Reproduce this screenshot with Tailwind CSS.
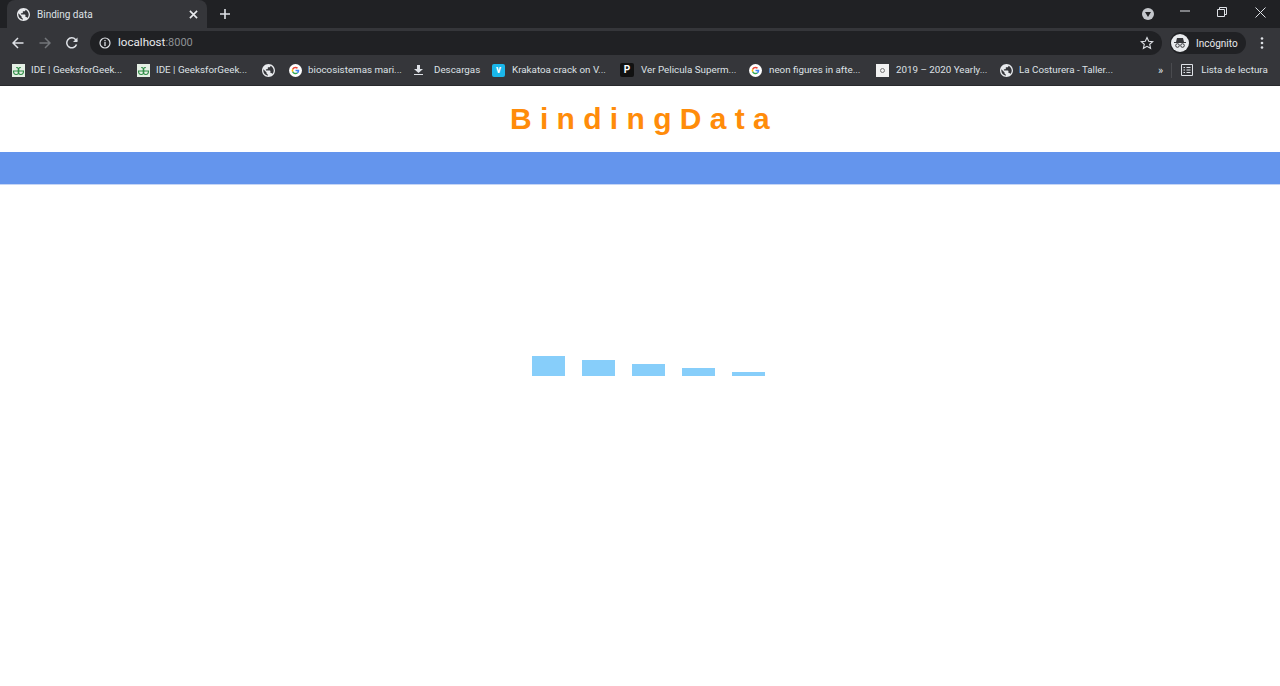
<!DOCTYPE html>
<html lang="en">
  <head>
    <meta charset="UTF-8" />
    <meta name="viewport" content="width=device-width, initial-scale=1.0" />
    <title>Binding data</title>
    <script src="https://cdn.jsdelivr.net/npm/@tailwindcss/browser@4"></script>
  </head>
  <body class="bg-white font-['Roboto',sans-serif] overflow-hidden h-[686px]">
    <!-- Tab strip -->
    <div class="h-[28px] bg-[#202124] flex items-end text-[#dee1e6]">
      <div class="ml-[7px] w-[200px] h-[28px] bg-[#35363a] rounded-t-lg flex items-center pl-[10px] pr-[9px]">
        <svg class="w-[13px] h-[13px] shrink-0" viewBox="2 2 20 20"><path fill="#e8eaed" d="M12 2C6.480 2 2 6.480 2 12s4.480 10 10 10 10-4.480 10-10S17.520 2 12 2zm-1 17.930c-3.950-.49-7-3.850-7-7.930 0-.62.08-1.210.21-1.790L9 15v1c0 1.100.9 2 2 2v1.930zm6.900-2.540c-.26-.81-1-1.390-1.900-1.390h-1v-3c0-.55-.45-1-1-1H8v-2h2c.55 0 1-.45 1-1V7h2c1.100 0 2-.9 2-2v-.41c2.930 1.190 5 4.060 5 7.410 0 2.080-.8 3.970-2.100 5.390z"/></svg>
        <span class="ml-[7px] text-[10px] flex-1">Binding data</span>
        <svg class="w-[9px] h-[9px]" viewBox="0 0 10 10"><path d="M1 1l8 8M9 1l-8 8" stroke="#e8eaed" stroke-width="1.800"/></svg>
      </div>
      <svg class="ml-[12px] mb-[8px] w-[12px] h-[12px]" viewBox="0 0 12 12"><path d="M6 1v10M1 6h10" stroke="#dee1e6" stroke-width="1.600"/></svg>
      <div class="ml-auto flex items-center h-[28px]">
        <div class="w-[12px] h-[12px] rounded-full bg-[#c4c7cc] flex items-center justify-center">
          <svg class="w-[6px] h-[5px]" viewBox="0 0 6 5"><path d="M0 0h6L3 5z" fill="#202124"/></svg>
        </div>
        <svg class="ml-[26px] mb-[6px] w-[10px] h-[10px]" viewBox="0 0 10 10"><path d="M0 5h10" stroke="#dee1e6"/></svg>
        <svg class="ml-[27px] mb-[4px] w-[10px] h-[10px]" viewBox="0 0 10 10" fill="none"><path d="M.5 2.500h7v7h-7zM2.500 2.500v-2h7v7h-2" stroke="#dee1e6"/></svg>
        <svg class="ml-[28px] mr-[14px] mb-[4px] w-[11px] h-[11px]" viewBox="0 0 11 11"><path d="M.5.5l10 10M10.500.5l-10 10" stroke="#dee1e6"/></svg>
      </div>
    </div>

    <!-- Toolbar -->
    <div class="h-[27px] pt-[3px] bg-[#35363a] flex items-center">
      <svg class="ml-[12px] w-[12px] h-[12px]" viewBox="0 0 12 12" fill="none"><path d="M11.500 6H1M6 1L1 6l5 5" stroke="#dee1e6" stroke-width="1.500"/></svg>
      <svg class="ml-[15px] w-[12px] h-[12px]" viewBox="0 0 12 12" fill="none"><path d="M.5 6H11M6 1l5 5-5 5" stroke="#73767a" stroke-width="1.500"/></svg>
      <svg class="ml-[15px] w-[12px] h-[12px]" viewBox="0 0 12 12" fill="none"><path d="M10.500 7.500A5 5 0 1 1 9.500 2.500L11 4" stroke="#dee1e6" stroke-width="1.500"/><path d="M11.500 .5v4.500H7z" fill="#dee1e6"/></svg>
      <div class="ml-[12px] w-[1072px] h-[24px] bg-[#202124] rounded-full flex items-center pl-[9px] pr-[8px]">
        <svg class="w-[12px] h-[12px]" viewBox="0 0 12 12" fill="none"><circle cx="6" cy="6" r="5" stroke="#dee1e6" stroke-width="1.200"/><path d="M6 5v4M6 3v1.200" stroke="#dee1e6" stroke-width="1.300"/></svg>
        <span class="ml-[7px] text-[11.600px] text-[#e8eaed]">localhost<span class="text-[#8e9195] text-[11px]">:8000</span></span>
        <svg class="ml-auto w-[14px] h-[14px]" viewBox="0 0 14 14" fill="none"><path d="M7 1.500l1.700 3.700 4 .4-3 2.700.9 4L7 10.300l-3.600 2 .9-4-3-2.700 4-.4z" stroke="#dee1e6" stroke-width="1.100"/></svg>
      </div>
      <div class="ml-[8px] w-[76px] h-[22px] bg-[#202124] rounded-full flex items-center pl-[1px]">
        <div class="w-[18px] h-[18px] rounded-full bg-[#e8eaed] flex items-center justify-center">
          <svg class="w-[14px] h-[14px]" viewBox="0 0 14 14" fill="none"><path d="M1 6h12v1H1zM4 2h6l1 4H3z" fill="#35363a"/><circle cx="4.500" cy="9.500" r="1.800" stroke="#35363a"/><circle cx="9.500" cy="9.500" r="1.800" stroke="#35363a"/></svg>
        </div>
        <span class="ml-[7px] text-[10px] text-[#e8eaed]">Incógnito</span>
      </div>
      <svg class="ml-[14px] w-[4px] h-[12px]" viewBox="0 0 4 12"><circle cx="2" cy="1.500" r="1.300" fill="#dee1e6"/><circle cx="2" cy="6" r="1.300" fill="#dee1e6"/><circle cx="2" cy="10.500" r="1.300" fill="#dee1e6"/></svg>
    </div>

    <!-- Bookmarks bar -->
    <div class="h-[31px] bg-[#35363a] border-b border-[#28292c] flex items-center text-[9.800px] text-[#dee1e6] whitespace-nowrap">
      <div class="ml-[12px] w-[112px] flex items-center">
        <svg class="w-[13px] h-[13px] shrink-0" viewBox="0 0 13 13"><rect width="13" height="13" fill="#e4efe4"/><path d="M6.500 7H1.500a2.700 3.500 0 1 0 2.700-3.500h1.500M6.500 7h5a2.700 3.500 0 1 1-2.700-3.500H7.300" fill="none" stroke="#2f8d46" stroke-width="1.100"/></svg>
        <span class="ml-[6px]">IDE | GeeksforGeek...</span>
      </div>
      <div class="ml-[13px] w-[112px] flex items-center">
        <svg class="w-[13px] h-[13px] shrink-0" viewBox="0 0 13 13"><rect width="13" height="13" fill="#e4efe4"/><path d="M6.500 7H1.500a2.700 3.500 0 1 0 2.700-3.500h1.500M6.500 7h5a2.700 3.500 0 1 1-2.700-3.500H7.300" fill="none" stroke="#2f8d46" stroke-width="1.100"/></svg>
        <span class="ml-[6px]">IDE | GeeksforGeek...</span>
      </div>
      <svg class="ml-[13px] w-[13px] h-[13px]" viewBox="2 2 20 20"><path fill="#e8eaed" d="M12 2C6.480 2 2 6.480 2 12s4.480 10 10 10 10-4.480 10-10S17.520 2 12 2zm-1 17.930c-3.950-.49-7-3.850-7-7.930 0-.62.08-1.210.21-1.790L9 15v1c0 1.100.9 2 2 2v1.930zm6.900-2.540c-.26-.81-1-1.390-1.900-1.390h-1v-3c0-.55-.45-1-1-1H8v-2h2c.55 0 1-.45 1-1V7h2c1.100 0 2-.9 2-2v-.41c2.930 1.190 5 4.060 5 7.410 0 2.080-.8 3.970-2.100 5.390z"/></svg>
      <svg class="ml-[14px] w-[13px] h-[13px]" viewBox="0 0 24 24"><circle cx="12" cy="12" r="12" fill="#fff"/><path d="M12 5a7 7 0 0 1 4.700 1.800l-2 2A4.200 4.200 0 0 0 8 10.500L5.700 8.700A7 7 0 0 1 12 5z" fill="#ea4335"/><path d="M5.700 8.700L8 10.500a4.200 4.200 0 0 0 0 3l-2.300 1.800a7 7 0 0 1 0-6.600z" fill="#fbbc05"/><path d="M8 13.500a4.200 4.200 0 0 0 6.400 2l2.200 1.700A7 7 0 0 1 5.700 15.300z" fill="#34a853"/><path d="M19 12c0 2-.8 3.900-2.400 5.200l-2.200-1.700a3.300 3.300 0 0 0 1.400-2.200H12v-2.800h6.800c.1.500.2 1 .2 1.500z" fill="#4285f4"/></svg>
      <span class="ml-[6px] w-[106px]">biocosistemas mari...</span>
      <svg class="w-[9px] h-[10px]" viewBox="0 0 9 10"><path d="M3 0h3v4h3L4.500 8 0 4h3zM0 9h9v1H0z" fill="#dee1e6"/></svg>
      <span class="ml-[11px] w-[58px]">Descargas</span>
      <div class="w-[13px] h-[13px] rounded-[2px] bg-[#1ab7ea] flex items-center justify-center shrink-0 text-white font-bold text-[10px] leading-none">v</div>
      <span class="ml-[7px] w-[108px]">Krakatoa crack on V...</span>
      <div class="w-[14px] h-[14px] rounded-[2px] bg-[#111] flex items-center justify-center shrink-0 text-white font-bold text-[10px] leading-none">P</div>
      <span class="ml-[7px] w-[108px]">Ver Pelicula Superm...</span>
      <svg class="w-[13px] h-[13px]" viewBox="0 0 24 24"><circle cx="12" cy="12" r="12" fill="#fff"/><path d="M12 5a7 7 0 0 1 4.700 1.800l-2 2A4.200 4.200 0 0 0 8 10.500L5.700 8.700A7 7 0 0 1 12 5z" fill="#ea4335"/><path d="M5.700 8.700L8 10.500a4.200 4.200 0 0 0 0 3l-2.300 1.800a7 7 0 0 1 0-6.600z" fill="#fbbc05"/><path d="M8 13.500a4.200 4.200 0 0 0 6.400 2l2.200 1.700A7 7 0 0 1 5.700 15.300z" fill="#34a853"/><path d="M19 12c0 2-.8 3.900-2.400 5.200l-2.200-1.700a3.300 3.300 0 0 0 1.400-2.200H12v-2.800h6.800c.1.500.2 1 .2 1.500z" fill="#4285f4"/></svg>
      <span class="ml-[7px] w-[107px]">neon figures in afte...</span>
      <div class="w-[13px] h-[13px] bg-[#f1f1f1] flex items-center justify-center shrink-0"><div class="w-[5px] h-[5px] rounded-full border border-[#777]"></div></div>
      <span class="ml-[7px] w-[104px]">2019 – 2020 Yearly...</span>
      <svg class="w-[13px] h-[13px]" viewBox="2 2 20 20"><path fill="#e8eaed" d="M12 2C6.480 2 2 6.480 2 12s4.480 10 10 10 10-4.480 10-10S17.520 2 12 2zm-1 17.930c-3.950-.49-7-3.850-7-7.930 0-.62.08-1.210.21-1.790L9 15v1c0 1.100.9 2 2 2v1.930zm6.900-2.540c-.26-.81-1-1.390-1.900-1.390h-1v-3c0-.55-.45-1-1-1H8v-2h2c.55 0 1-.45 1-1V7h2c1.100 0 2-.9 2-2v-.41c2.930 1.190 5 4.060 5 7.410 0 2.080-.8 3.970-2.100 5.390z"/></svg>
      <span class="ml-[6px] w-[139px]">La Costurera - Taller...</span>
      <span class="text-[11px] leading-none">»</span>
      <div class="ml-[8px] w-px h-[15px] bg-[#4a4b4f]"></div>
      <svg class="ml-[9px] w-[12px] h-[12px]" viewBox="0 0 12 12" fill="none"><path d="M.5.5h11v11H.5zM2.500 3.500h1.500M2.500 6h1.500M2.500 8.500h1.500M5.500 3.500h4M5.500 6h4M5.500 8.500h4" stroke="#dee1e6"/></svg>
      <span class="ml-[8px]">Lista de lectura</span>
    </div>

    <!-- Page -->
    <h1 class="h-[66px] pl-[8px] pb-[2px] flex items-center justify-center font-['Liberation_Sans',sans-serif] font-bold text-[30px] tracking-[8.300px] text-[#ff8c0a]">BindingData</h1>
    <div class="h-[33px] bg-[#6495ed] border-b border-[#c5d5f5]"></div>
    <div id="bars" class="mt-[171px] ml-[532px] flex items-end gap-[17px] h-[20px]"></div>

    <script>
      // Bar heights come from the data array
      const data = [20, 16, 12, 8, 4];
      const bars = document.getElementById("bars");
      data.forEach((value) => {
        const bar = document.createElement("div");
        bar.className = "w-[33px] bg-[#87cefa]";
        bar.style.height = value + "px";
        bars.appendChild(bar);
      });
    </script>
  </body>
</html>
